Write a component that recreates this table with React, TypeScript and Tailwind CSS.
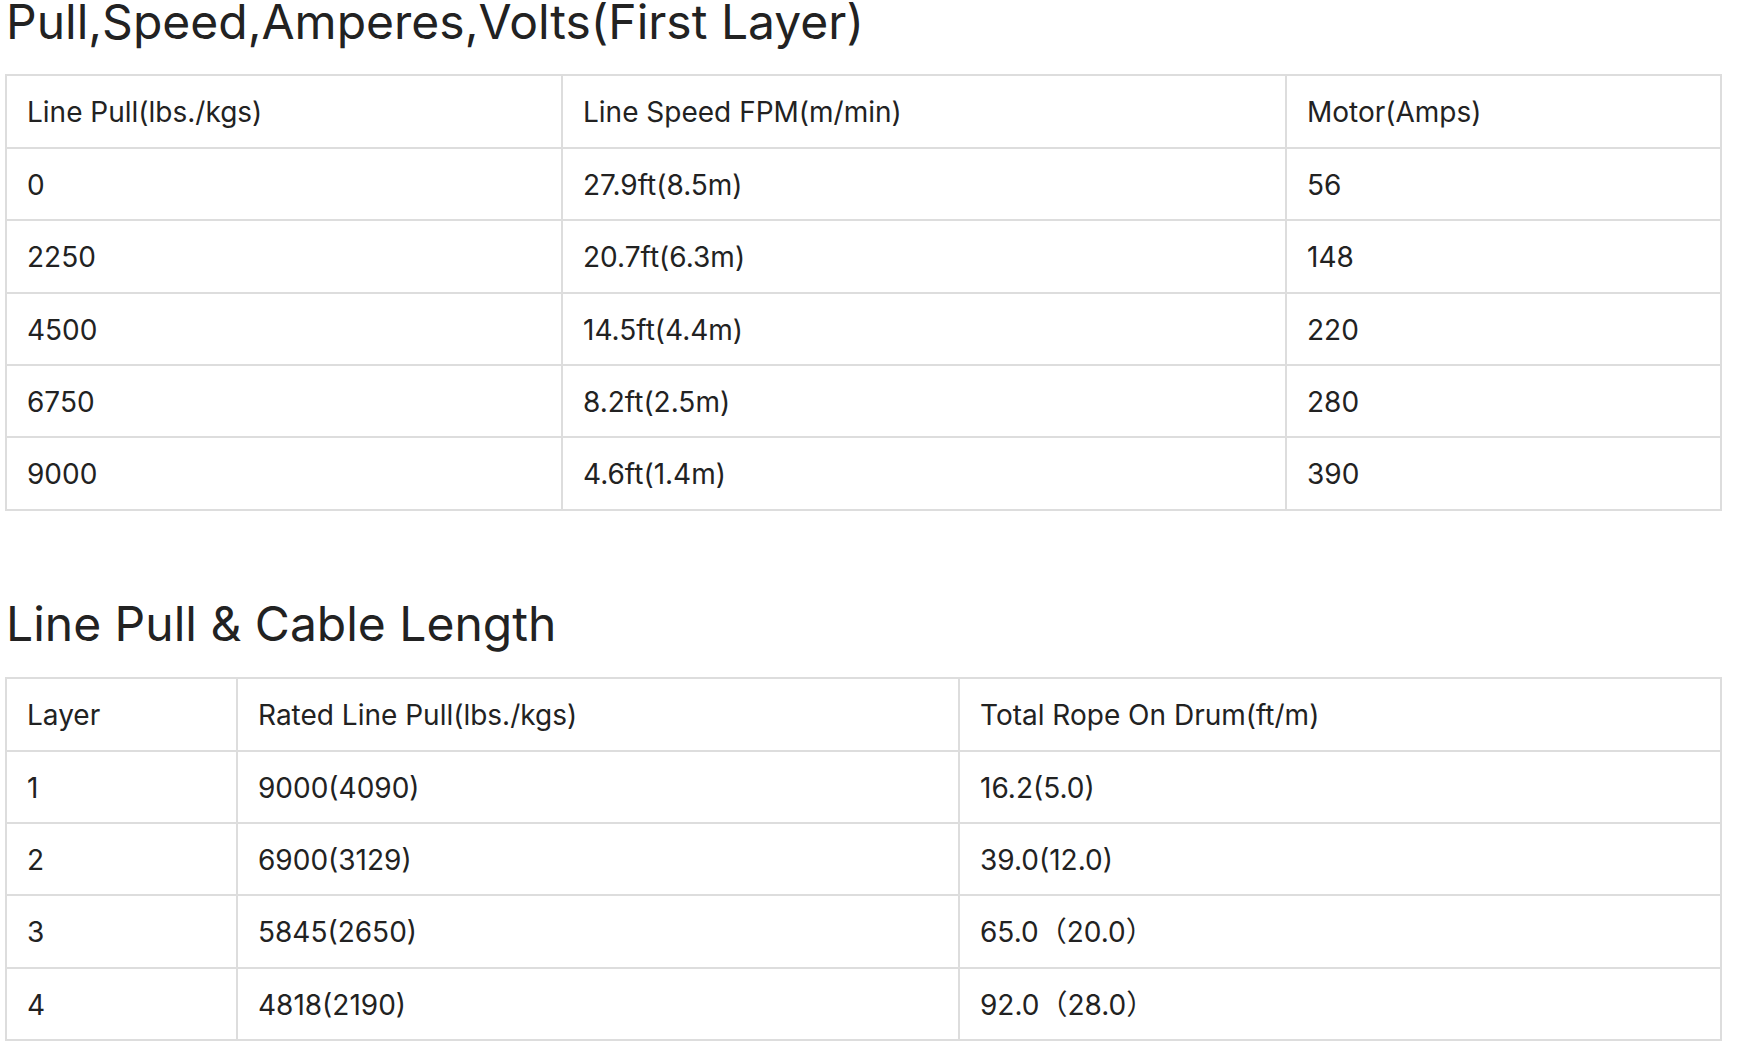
import React from 'react';

const pullSpeed = [
  ['Line Pull(lbs./kgs)', 'Line Speed FPM(m/min)', 'Motor(Amps)'],
  ['0', '27.9ft(8.5m)', '56'],
  ['2250', '20.7ft(6.3m)', '148'],
  ['4500', '14.5ft(4.4m)', '220'],
  ['6750', '8.2ft(2.5m)', '280'],
  ['9000', '4.6ft(1.4m)', '390'],
];

const cable = [
  ['Layer', 'Rated Line Pull(lbs./kgs)', 'Total Rope On Drum(ft/m)'],
  ['1', '9000(4090)', '16.2(5.0)'],
  ['2', '6900(3129)', '39.0(12.0)'],
  ['3', '5845(2650)', '65.0（20.0）'],
  ['4', '4818(2190)', '92.0（28.0）'],
];

const SpecTable = ({ rows, cols }: { rows: string[][]; cols: string[] }) => (
  <table className="table-fixed border-collapse w-[1715px] text-[28px] text-[#222]">
    <colgroup>
      {cols.map((w, i) => (
        <col key={i} className={w} />
      ))}
    </colgroup>
    <tbody>
      {rows.map((row, r) => (
        <tr key={r}>
          {row.map((cell, c) => (
            <td
              key={c}
              className="border-2 border-[#dddddd] px-[20px] pt-[17px] pb-[15px] leading-[38.4px] whitespace-nowrap"
            >
              {cell}
            </td>
          ))}
        </tr>
      ))}
    </tbody>
  </table>
);

export default function App() {
  return (
    <div
      className="bg-white min-h-screen pl-[5px] overflow-hidden"
      style={{ fontFamily: 'Inter, "Noto Sans", "Noto Sans CJK SC", sans-serif' }}
    >
      {/* first layer */}
      <h2 className="mt-[-8px] text-[48px] leading-[59.4px] font-normal text-[#222] pl-[1px]">
        Pull,Speed,Amperes,Volts(First Layer)
      </h2>
      <div className="mt-[23px]">
        <SpecTable rows={pullSpeed} cols={['w-[556px]', 'w-[724px]', 'w-[435px]']} />
      </div>

      {/* cable */}
      <h2 className="mt-[83px] text-[48px] leading-[59.4px] font-normal text-[#222] pl-[1px]">
        Line Pull &amp; Cable Length
      </h2>
      <div className="mt-[24px]">
        <SpecTable rows={cable} cols={['w-[231px]', 'w-[722px]', 'w-[762px]']} />
      </div>
    </div>
  );
}
